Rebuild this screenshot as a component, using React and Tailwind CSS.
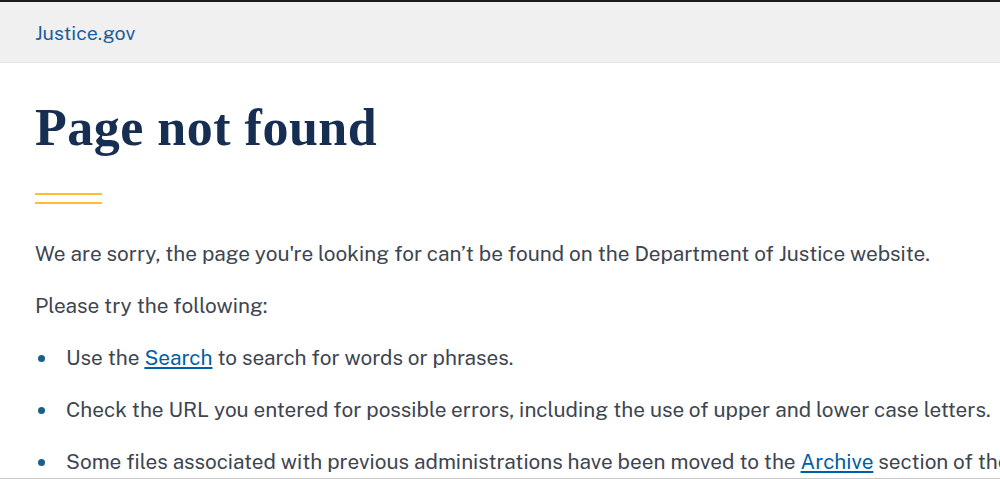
import React from 'react';

function App() {
  const items = [
    <>Use the <a href="#" className="text-[#005ea2] underline underline-offset-2">Search</a> to search for words or phrases.</>,
    <>Check the URL you entered for possible errors, including the use of upper and lower case letters.</>,
    <>Some files associated with previous administrations have been moved to the <a href="#" className="text-[#005ea2] underline underline-offset-2">Archive</a> section of the website.</>,
  ];

  return (
    <div className="h-[479px] overflow-hidden bg-white border-t-2 border-[#1b1b1b] border-b border-b-[#c9c9c9] font-['Public_Sans','Noto_Sans','Liberation_Sans',sans-serif]">
      {/* Header */}
      <div className="h-[61px] bg-[#f0f0f0] border-b border-[#e6e6e6] flex items-center pt-[2px] px-[35px]">
        <a href="#" className="text-[19.6px] text-[#1a5e9a]">Justice.gov</a>
      </div>

      <div className="px-[35px] text-[#3d4551]">
        <h1 className="mt-[35px] text-[52px] leading-[60px] font-bold text-[#162e51] font-['Liberation_Serif','DejaVu_Serif',serif] tracking-[0.5px]">
          Page not found
        </h1>
        <div className="mt-[35px] w-[67px] h-[11px] border-y-2 border-[#ffbe2e]"></div>

        <p className="mt-[37px] text-[20.75px] leading-[26px] whitespace-nowrap">
          We are sorry, the page you're looking for can’t be found on the Department of Justice website.
        </p>
        <p className="mt-[26px] text-[20.75px] leading-[26px] whitespace-nowrap">Please try the following:</p>
        <ul className="mt-[26px] flex flex-col gap-[26px]">
          {items.map((it, i) => (
            <li key={i} className="flex items-center text-[20.75px] leading-[26px] whitespace-nowrap">
              <span className="w-[7px] h-[7px] rounded-full bg-[#1a5e8c] ml-[3px] mr-[21px] shrink-0"></span>
              <span>{it}</span>
            </li>
          ))}
        </ul>
      </div>
    </div>
  );
}

export default App;
